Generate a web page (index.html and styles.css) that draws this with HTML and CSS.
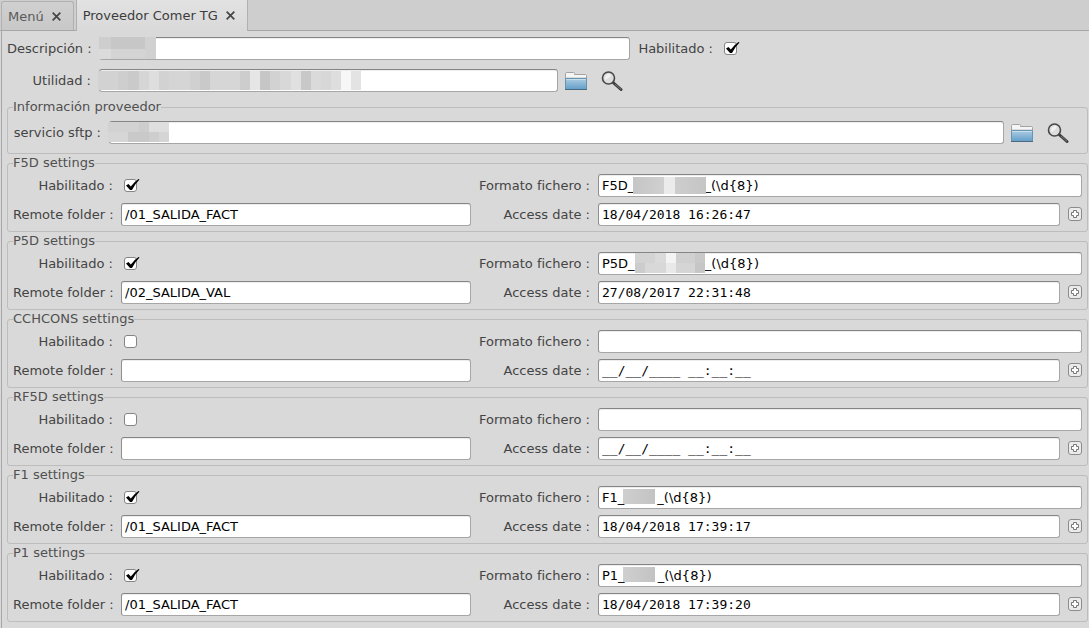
FILE: index.html
```html
<!DOCTYPE html>
<html lang="es">
<head>
<meta charset="utf-8">
<title>Proveedor Comer TG</title>
<link rel="stylesheet" href="styles.css">
</head>
<body>
<svg class="defs" aria-hidden="true">
  <defs>
    <linearGradient id="blue" x1="0" y1="0" x2="0" y2="1"><stop offset="0" stop-color="#accde2"/><stop offset="1" stop-color="#629dc9"/></linearGradient>
    <symbol id="folder" viewBox="0 0 22 18">
      <path d="M.5 17.500V1.500Q.5.500 1.500.500H8.500Q9.500.500 9.500 1.500V2.500H20.500Q21.500 2.500 21.500 3.500V17.500Z" fill="#f5f5f5" stroke="#a3a3a3"/>
      <path d="M1 5.500H21" stroke="#dcdcdc"/>
      <path d="M.5 6.500H21.500V17.500H.5Z" fill="url(#blue)" stroke="#6595b5"/>
      <path d="M1 7.500H21" stroke="#c8deeb"/>
      <path d="M0 17.500H22" stroke="#4d6b80"/>
    </symbol>
    <symbol id="search" viewBox="0 0 22 20">
      <path d="M11.500 11L20 18.500" stroke="#3f3f3f" stroke-width="3" stroke-linecap="round"/>
      <path d="M14 13L20 18.300" stroke="#777" stroke-width="1"/>
      <circle cx="7.500" cy="7" r="6" fill="#dedede" stroke="#484848" stroke-width="1.600"/>
      <path d="M4 9A4.500 4.500 0 0 1 10 3.500Q9 7 4 9Z" fill="#f2f2f2"/>
    </symbol>
    <symbol id="plus" viewBox="0 0 8 8">
      <path d="M2.500.500H5.500V2.500H7.500V5.500H5.500V7.500H2.500V5.500H.5V2.500H2.500Z" fill="#fff" stroke="#777"/>
    </symbol>
    <symbol id="close" viewBox="0 0 8 8">
      <path d="M.6.600L7.400 7.400M7.400.600L.6 7.400" stroke="currentColor" stroke-width="1.500"/>
    </symbol>
  </defs>
</svg>

<nav class="tabs">
  <div class="tab"><a href="#menu">Menú</a><button type="button" class="close" aria-label="Cerrar Menú"><svg><use href="#close"/></svg></button></div>
  <div class="tab active"><a href="#proveedor">Proveedor Comer TG</a><button type="button" class="close" aria-label="Cerrar Proveedor Comer TG"><svg><use href="#close"/></svg></button></div>
</nav>

<main class="page" id="proveedor">
  <div class="head">
    <label for="desc">Descripción :</label>
    <div class="field"><input type="text" id="desc"><span class="mask mask-desc"></span></div>
    <label for="enabled">Habilitado :</label>
    <input type="checkbox" id="enabled" checked>
    <label for="util">Utilidad :</label>
    <div class="lookup">
      <div class="field"><input type="text" id="util"><span class="mask mask-util"></span></div>
      <button type="button" class="tool" aria-label="Abrir utilidad"><svg class="folder"><use href="#folder"/></svg></button>
      <button type="button" class="tool" aria-label="Buscar utilidad"><svg class="search"><use href="#search"/></svg></button>
    </div>
  </div>

  <fieldset class="provider">
    <legend>Información proveedor</legend>
    <div class="lookup">
      <label for="sftp">servicio sftp :</label>
      <div class="field"><input type="text" id="sftp"><span class="mask mask-sftp"></span></div>
      <button type="button" class="tool" aria-label="Abrir servicio"><svg class="folder"><use href="#folder"/></svg></button>
      <button type="button" class="tool" aria-label="Buscar servicio"><svg class="search"><use href="#search"/></svg></button>
    </div>
  </fieldset>

  <fieldset>
    <legend>F5D settings</legend>
    <div class="grid">
      <label for="f5d-on">Habilitado :</label><input type="checkbox" id="f5d-on" checked>
      <label for="f5d-format">Formato fichero :</label>
      <div class="field"><input type="text" id="f5d-format" value="F5D_                 _(\d{8})"><span class="mask mask-f5d"></span></div>
      <label for="f5d-dir">Remote folder :</label><input type="text" id="f5d-dir" value="/01_SALIDA_FACT">
      <label for="f5d-date">Access date :</label>
      <div class="date"><input type="text" id="f5d-date" value="18/04/2018 16:26:47"><button type="button" class="add" aria-label="Elegir fecha"><svg><use href="#plus"/></svg></button></div>
    </div>
  </fieldset>

  <fieldset>
    <legend>P5D settings</legend>
    <div class="grid">
      <label for="p5d-on">Habilitado :</label><input type="checkbox" id="p5d-on" checked>
      <label for="p5d-format">Formato fichero :</label>
      <div class="field"><input type="text" id="p5d-format" value="P5D_                 _(\d{8})"><span class="mask mask-p5d"></span></div>
      <label for="p5d-dir">Remote folder :</label><input type="text" id="p5d-dir" value="/02_SALIDA_VAL">
      <label for="p5d-date">Access date :</label>
      <div class="date"><input type="text" id="p5d-date" value="27/08/2017 22:31:48"><button type="button" class="add" aria-label="Elegir fecha"><svg><use href="#plus"/></svg></button></div>
    </div>
  </fieldset>

  <fieldset>
    <legend>CCHCONS settings</legend>
    <div class="grid">
      <label for="cch-on">Habilitado :</label><input type="checkbox" id="cch-on">
      <label for="cch-format">Formato fichero :</label><input type="text" id="cch-format">
      <label for="cch-dir">Remote folder :</label><input type="text" id="cch-dir">
      <label for="cch-date">Access date :</label>
      <div class="date"><input type="text" id="cch-date" value="__/__/____ __:__:__"><button type="button" class="add" aria-label="Elegir fecha"><svg><use href="#plus"/></svg></button></div>
    </div>
  </fieldset>

  <fieldset>
    <legend>RF5D settings</legend>
    <div class="grid">
      <label for="rf5d-on">Habilitado :</label><input type="checkbox" id="rf5d-on">
      <label for="rf5d-format">Formato fichero :</label><input type="text" id="rf5d-format">
      <label for="rf5d-dir">Remote folder :</label><input type="text" id="rf5d-dir">
      <label for="rf5d-date">Access date :</label>
      <div class="date"><input type="text" id="rf5d-date" value="__/__/____ __:__:__"><button type="button" class="add" aria-label="Elegir fecha"><svg><use href="#plus"/></svg></button></div>
    </div>
  </fieldset>

  <fieldset>
    <legend>F1 settings</legend>
    <div class="grid">
      <label for="f1-on">Habilitado :</label><input type="checkbox" id="f1-on" checked>
      <label for="f1-format">Formato fichero :</label>
      <div class="field"><input type="text" id="f1-format" value="F1_        _(\d{8})"><span class="mask mask-f1"></span></div>
      <label for="f1-dir">Remote folder :</label><input type="text" id="f1-dir" value="/01_SALIDA_FACT">
      <label for="f1-date">Access date :</label>
      <div class="date"><input type="text" id="f1-date" value="18/04/2018 17:39:17"><button type="button" class="add" aria-label="Elegir fecha"><svg><use href="#plus"/></svg></button></div>
    </div>
  </fieldset>

  <fieldset>
    <legend>P1 settings</legend>
    <div class="grid">
      <label for="p1-on">Habilitado :</label><input type="checkbox" id="p1-on" checked>
      <label for="p1-format">Formato fichero :</label>
      <div class="field"><input type="text" id="p1-format" value="P1_        _(\d{8})"><span class="mask mask-f1"></span></div>
      <label for="p1-dir">Remote folder :</label><input type="text" id="p1-dir" value="/01_SALIDA_FACT">
      <label for="p1-date">Access date :</label>
      <div class="date"><input type="text" id="p1-date" value="18/04/2018 17:39:20"><button type="button" class="add" aria-label="Elegir fecha"><svg><use href="#plus"/></svg></button></div>
    </div>
  </fieldset>
</main>
</body>
</html>
```
FILE: styles.css
```css
* { box-sizing: border-box; }

body {
  margin: 0;
  background: #d9d9d9;
  color: #444;
  font: 13px/17px "DejaVu Sans", sans-serif;
}

.defs { position: absolute; width: 0; height: 0; }

/* Tabs */
.tabs {
  display: flex;
  align-items: flex-end;
  gap: 2px;
  padding-left: 1px;
  height: 31px;
  background: #cecece;
  box-shadow: inset 0 -1px #a6a6a6;
}
.tab {
  display: flex;
  align-items: center;
  gap: 8px;
  height: 30px;
  padding: 0 12px 0 6px;
  border: 1px solid #b0b0b0;
  border-bottom-color: #a6a6a6;
  border-radius: 3px 3px 0 0;
  background: linear-gradient(#d0d0d0, #c8c8c8);
}
.tab a { color: #5a5a5a; text-decoration: none; }
.tab.active {
  height: 31px;
  border-top: 0;
  border-bottom: 0;
  border-radius: 0;
  background: linear-gradient(#e2e2e2, #d9d9d9);
}
.tab.active a { color: #3c3c3c; }

button { padding: 0; border: 0; background: none; color: inherit; }
svg { display: block; }
.close, .close svg { width: 9px; height: 9px; }

/* Page */
.page {
  display: flex;
  flex-direction: column;
  gap: 1px;
  margin-left: 1px;
  padding: 6px 1px 6px 5px;
  border-left: 1px solid #a6a6a6;
}
label { text-align: right; white-space: nowrap; }

.head {
  display: grid;
  grid-template-columns: 84px 531fr 75px 367fr;
  gap: 9px 8px;
  align-items: center;
  margin-bottom: 6px;
}

input[type="text"] {
  display: block;
  width: 100%;
  min-width: 0;
  height: 23px;
  padding: 0 3px;
  border: 1px solid #a6a6a6;
  border-top-color: #858585;
  border-left-color: #8f8f8f;
  border-radius: 3px;
  background: #fff;
  box-shadow: inset 0 1px #ededed;
  color: #000;
  font: 13px/17px "DejaVu Sans", sans-serif;
  outline: none;
}
.date input[type="text"] { font-family: "DejaVu Sans Mono", monospace; }

input[type="checkbox"] {
  appearance: none;
  position: relative;
  width: 13px;
  height: 13px;
  margin: 0 3px;
  border: 1px solid #858585;
  border-radius: 3px;
  background: #fff;
}
input[type="checkbox"]:checked::after {
  content: "";
  position: absolute;
  left: 1px;
  top: -1px;
  width: 14px;
  height: 12px;
  background: url("data:image/svg+xml,%3Csvg xmlns='http://www.w3.org/2000/svg' viewBox='0 0 14 12'%3E%3Cpath d='M0 6.500L2.500 5L4.800 7.500Q8 3 12.500 0L13.500.600Q9 5 6 11H4Z'/%3E%3C/svg%3E") no-repeat;
}

.lookup { display: flex; align-items: center; }
.field { position: relative; flex: 1; min-width: 0; }
.tool { display: flex; justify-content: center; width: 36px; }
.folder { width: 22px; height: 18px; }
.search { width: 22px; height: 20px; }

/* Groups */
fieldset {
  min-width: 0;
  margin: 0;
  padding: 2px 5px 5px;
  border: 1px solid #bdbdbd;
  border-radius: 3px;
}
legend { height: 17px; padding: 0; color: #505050; line-height: 15px; }
.provider { padding: 5px 5px 9px; }
.provider .lookup { padding-right: 6px; }
.provider label { width: 88px; margin-right: 8px; }

.grid {
  display: grid;
  grid-template-columns: 100px 350fr 111px 484fr;
  gap: 6px 8px;
  align-items: center;
}
.date { display: flex; align-items: center; gap: 8px; }
.date input { flex: 1; }
.add {
  display: grid;
  place-items: center;
  flex: none;
  width: 14px;
  height: 14px;
  margin-bottom: 1px;
  border: 1px solid #8c8c8c;
  border-radius: 3px;
  background: #ebebeb;
}
.add svg { width: 8px; height: 8px; }

/* Obscured values */
.mask { position: absolute; }
.mask-desc {
  left: 0; top: 0; width: 57px; height: 22px;
  background:
    linear-gradient(90deg, #cecece 12px, #c7c7c7 12px 46px, #d1d1d1 46px) 0 0 / 100% 12px no-repeat,
    linear-gradient(90deg, #dbdbdb 12px, #d4d4d4 12px 46px, #d1d1d1 46px);
}
.mask-util {
  left: -1px; top: 2px; width: 263px; height: 19px;
  background: linear-gradient(90deg, #d2d2d2 20px, #cecece 20px 30px, #cacaca 30px 41px, #d6d6d6 41px 51px, #dedede 51px 61px, #d2d2d2 61px 71px, #d5d5d5 71px 92px, #d0d0d0 92px 102px, #c9c9c9 102px 112px, #d6d6d6 112px 142px, #cdcdcd 142px 152px, #e6e6e6 152px 162px, #c6c6c6 162px 172px, #d2d2d2 172px 182px, #d8d8d8 182px 193px, #e0e0e0 193px 203px, #c8c8c8 203px 213px, #dadada 213px 223px, #d7d7d7 223px 233px, #dedede 233px 243px, #f7f7f7 243px 253px, #e3e3e3 253px);
}
.mask-sftp {
  left: -1px; top: 1px; width: 61px; height: 20px;
  background:
    linear-gradient(90deg, #d2d2d2 31px, #cdcdcd 31px 41px, #dedede 41px) 0 0 / 100% 10px no-repeat,
    linear-gradient(90deg, #d6d6d6 20px, #c9c9c9 20px 41px, #cecece 41px 51px, #d5d5d5 51px);
}
.mask-f5d {
  left: 35px; top: 3px; width: 73px; height: 17px;
  background: linear-gradient(90deg, #c5c5c5, #d0d0d0 31px, #ebebeb 31px 42px, #cdcdcd 42px, #c5c5c5);
}
.mask-p5d {
  left: 37px; top: 1px; width: 70px; height: 20px;
  background:
    linear-gradient(90deg, #d3d3d3 20px, #dadada 20px 31px, #f4f4f4 31px 41px, #d0d0d0 41px 60px, #c9c9c9 60px) 0 0 / 100% 10px no-repeat,
    linear-gradient(90deg, #cccccc 10px, #d8d8d8 10px 31px, #e9e9e9 31px 41px, #d5d5d5 41px 60px, #c6c6c6 60px);
}
.mask-f1 {
  left: 25px; top: 3px; width: 32px; height: 15px;
  background: linear-gradient(90deg, #cfcfcf, #c3c3c3);
}
```
